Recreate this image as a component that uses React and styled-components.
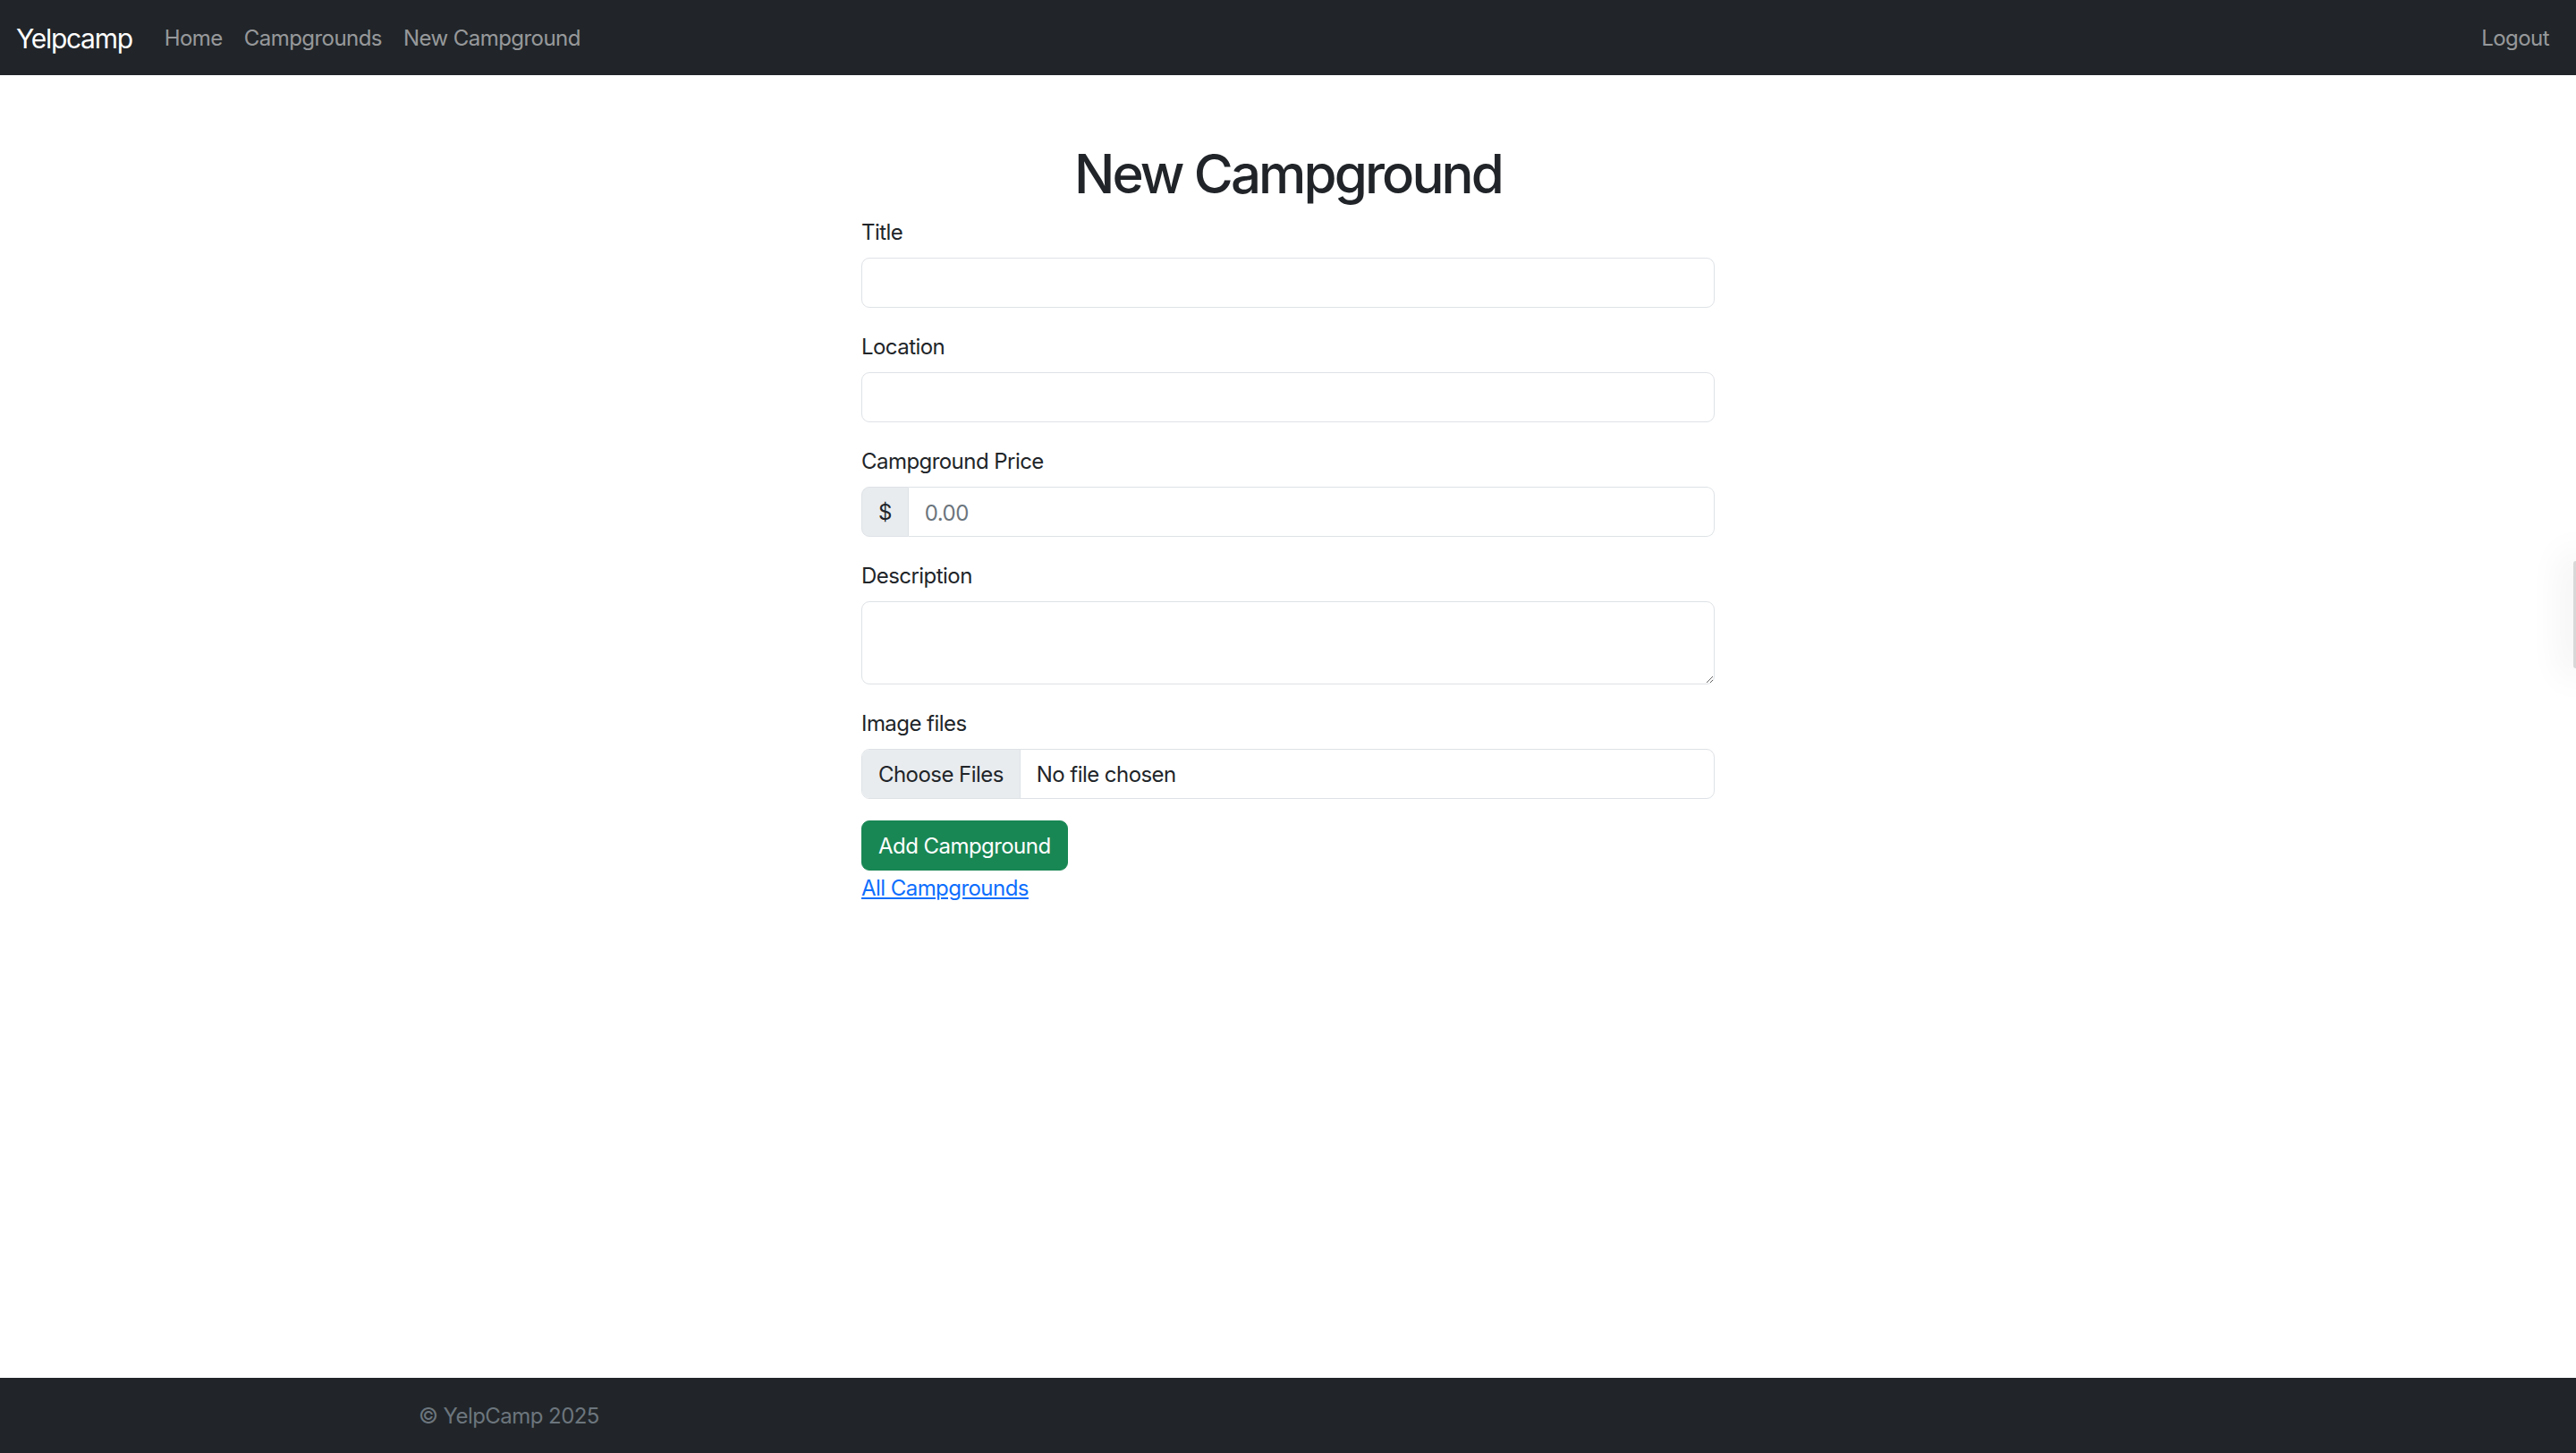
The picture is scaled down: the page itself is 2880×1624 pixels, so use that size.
import React from "react";
import styled, { createGlobalStyle } from "styled-components";

const Global = createGlobalStyle`
  * { box-sizing: border-box; }
  html, body { margin: 0; padding: 0; }
  body {
    font-family: Inter, "Noto Sans", "Liberation Sans", sans-serif;
    font-size: 24px;
    line-height: 36px;
    letter-spacing: -0.55px;
    color: #212529;
    background: #fff;
  }
`;

const Page = styled.div`
  min-height: 1624px;
  display: flex;
  flex-direction: column;
  position: relative;
  overflow: hidden;
`;

const NavBar = styled.nav`
  background: #212529;
  height: 84px;
  display: flex;
  align-items: center;
  padding: 2px 18px 0;
`;

const Brand = styled.a`
  font-size: 30px;
  line-height: 45px;
  letter-spacing: -1.3px;
  color: #fff;
  text-decoration: none;
  margin-right: 24px;
`;

const NavList = styled.div`
  display: flex;
  align-items: center;
  flex: 1;
`;

const NavLink = styled.a`
  color: rgba(255, 255, 255, 0.55);
  text-decoration: none;
  padding: 12px;
  font-size: 24px;
  line-height: 36px;
  margin-left: ${(p) => (p.$push ? "auto" : "0")};
`;

const Main = styled.main`
  width: 954px;
  margin: 72px auto 0;
`;

const Heading = styled.h1`
  font-size: 60px;
  line-height: 72px;
  font-weight: 500;
  letter-spacing: -2.9px;
  text-align: center;
  margin: 0 0 10px;
  padding-top: 2px;
`;

const Field = styled.div`
  margin-bottom: 24px;
`;

const Label = styled.label`
  display: block;
  padding-top: 2px;
  margin-bottom: 10px;
`;

const Input = styled.input`
  display: block;
  width: 100%;
  height: 56px;
  padding: 2px 18px 0;
  font: inherit;
  letter-spacing: inherit;
  color: #212529;
  border: 1px solid #dee2e6;
  border-radius: 9px;
  background: #fff;
  outline: none;
  &::placeholder { color: #6c757d; }
`;

const TextArea = styled.textarea`
  display: block;
  width: 100%;
  height: 93px;
  padding: 9px 18px;
  font: inherit;
  border: 1px solid #dee2e6;
  border-radius: 9px;
  outline: none;
  resize: vertical;
`;

const Group = styled.div`
  display: flex;
  height: 56px;
`;

const Addon = styled.span`
  display: flex;
  align-items: center;
  padding: 2px 18px 0;
  background: #e9ecef;
  border: 1px solid #dee2e6;
  border-radius: 9px 0 0 9px;
`;

const GroupInput = styled(Input)`
  flex: 1;
  border-left: none;
  border-radius: 0 9px 9px 0;
`;

const FileBox = styled.label`
  display: flex;
  align-items: stretch;
  height: 56px;
  border: 1px solid #dee2e6;
  border-radius: 9px;
  overflow: hidden;
  cursor: pointer;
`;

const FileButton = styled.span`
  display: flex;
  align-items: center;
  padding: 2px 18px 0;
  background: #e9ecef;
  border-right: 1px solid #dee2e6;
`;

const FileText = styled.span`
  display: flex;
  align-items: center;
  padding: 2px 18px 0;
`;

const HiddenFile = styled.input`
  display: none;
`;

const SubmitButton = styled.button`
  display: block;
  height: 56px;
  padding: 2px 18px 0;
  font: inherit;
  letter-spacing: inherit;
  color: #fff;
  background: #198754;
  border: 1px solid #198754;
  border-radius: 9px;
  cursor: pointer;
`;

const BackLink = styled.a`
  display: inline-block;
  padding-top: 2px;
  color: #0d6efd;
  text-decoration: underline;
`;

const Footer = styled.footer`
  margin-top: auto;
  background: #212529;
  height: 84px;
  display: flex;
  align-items: center;
  padding-top: 2px;
`;

const FooterInner = styled.div`
  width: 1980px;
  margin: 0 auto;
  padding: 0 18px;
  color: #6c757d;
`;

const EdgeTab = styled.div`
  position: absolute;
  right: 0;
  top: 627px;
  width: 3px;
  height: 120px;
  background: #d8d8d8;
  box-shadow: 0 0 40px 10px rgba(0, 0, 0, 0.07);
  border-radius: 3px 0 0 3px;
`;

export default function App() {
  return (
    <Page>
      <Global />
      <NavBar>
        <Brand href="#">Yelpcamp</Brand>
        <NavList>
          <NavLink href="#">Home</NavLink>
          <NavLink href="#">Campgrounds</NavLink>
          <NavLink href="#">New Campground</NavLink>
          <NavLink href="#" $push>Logout</NavLink>
        </NavList>
      </NavBar>
      <Main>
        <Heading>New Campground</Heading>
        <form onSubmit={(e) => e.preventDefault()}>
          <Field>
            <Label htmlFor="title">Title</Label>
            <Input id="title" type="text" />
          </Field>
          <Field>
            <Label htmlFor="location">Location</Label>
            <Input id="location" type="text" />
          </Field>
          <Field>
            <Label htmlFor="price">Campground Price</Label>
            <Group>
              <Addon>$</Addon>
              <GroupInput id="price" type="text" placeholder="0.00" />
            </Group>
          </Field>
          <Field>
            <Label htmlFor="description">Description</Label>
            <TextArea id="description" rows={2} />
          </Field>
          <Field>
            <Label htmlFor="image">Image files</Label>
            <FileBox>
              <FileButton>Choose Files</FileButton>
              <FileText>No file chosen</FileText>
              <HiddenFile id="image" type="file" multiple />
            </FileBox>
          </Field>
          <SubmitButton type="submit">Add Campground</SubmitButton>
        </form>
        <BackLink href="#">All Campgrounds</BackLink>
      </Main>
      <Footer>
        <FooterInner>© YelpCamp 2025</FooterInner>
      </Footer>
      <EdgeTab />
    </Page>
  );
}
